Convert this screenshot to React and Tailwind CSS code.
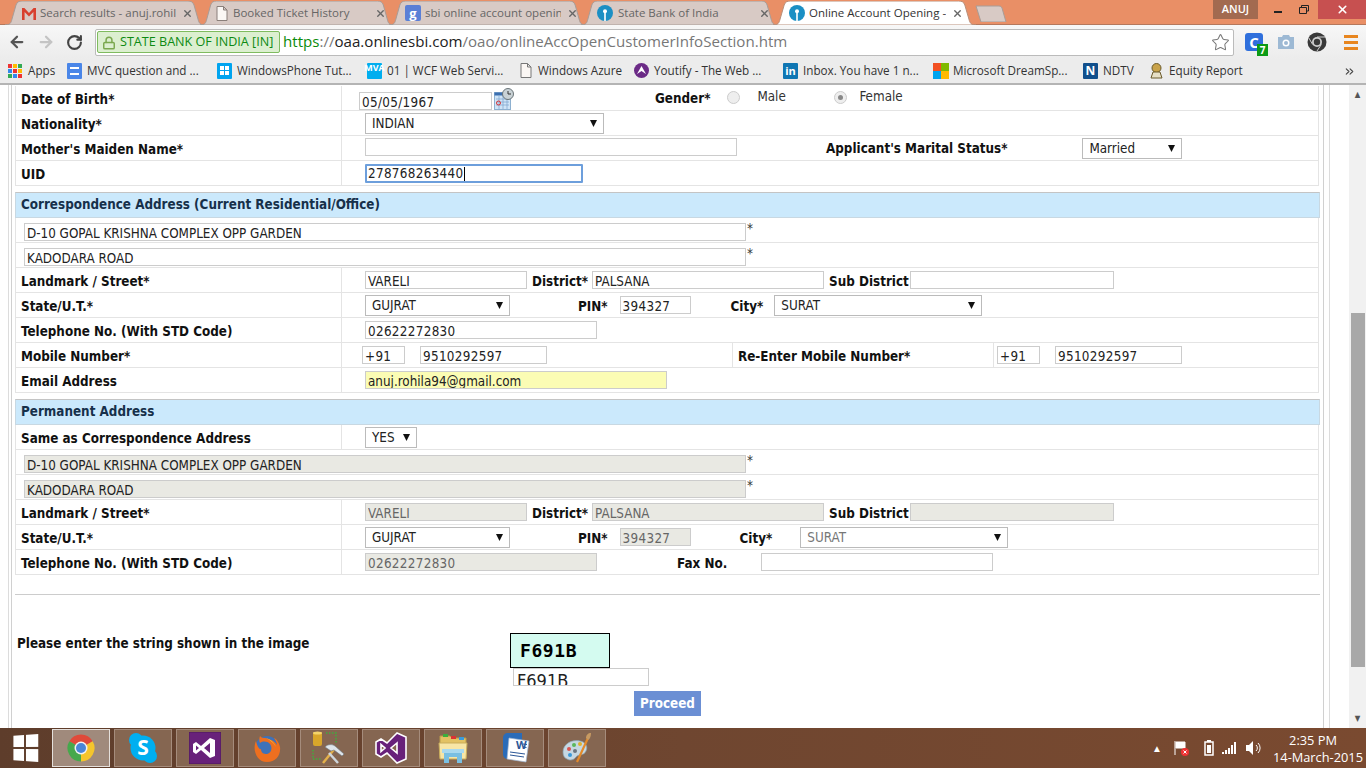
import React from "react";
import { ArrowLeft, ArrowRight, RotateCw, Star, Lock, X, ChevronsRight } from "lucide-react";

const pageFont = "font-['DejaVu_Sans_Condensed','Noto_Sans',sans-serif]";
const uiFont = "font-['Open_Sans','Noto_Sans',sans-serif]";

function TabShape({ active }) {
  return (
    <svg className="absolute inset-0 h-full w-full" viewBox="0 0 200 24" preserveAspectRatio="none">
      <path
        d="M0 24 C5 24 6 22 7 18 L11 4 C12 1 14 0 17 0 L183 0 C186 0 188 1 189 4 L193 18 C194 22 195 24 200 24 Z"
        fill={active ? "#ffffff" : "#d8cac5"}
        stroke={active ? "#b98f7a" : "#a89c97"}
        strokeWidth="1"
        vectorEffect="non-scaling-stroke"
      />
    </svg>
  );
}

function GmailIcon() {
  return (
    <svg width="16" height="13" viewBox="0 0 16 13">
      <path d="M1 1h2.400L8 6l4.600-5H15v12h-2.600V5L8 9.400 3.600 5v8H1z" fill="#d8402f" />
    </svg>
  );
}

function PageIcon({ stroke = "#8a7f7a" }) {
  return (
    <svg width="12" height="15" viewBox="0 0 12 15">
      <path d="M1 .5h6.500L11 4v10.500H1z M7.500.5V4H11" fill="#fbf7f4" stroke={stroke} />
    </svg>
  );
}

function GoogleIcon() {
  return (
    <div className="flex h-[16px] w-[16px] items-center justify-center rounded-[2px] bg-[#5a7fd6] text-[13px] font-bold leading-none text-white">
      g
    </div>
  );
}

function SbiIcon() {
  return (
    <svg width="16" height="16" viewBox="0 0 16 16">
      <circle cx="8" cy="8" r="8" fill="#1b8fc4" />
      <circle cx="8" cy="6.200" r="2" fill="#fff" />
      <rect x="7.200" y="7" width="1.600" height="9" fill="#fff" />
    </svg>
  );
}

const tabs = [
  { title: "Search results - anuj.rohila", icon: <GmailIcon />, width: "w-[200px]", iconW: "w-[19px]", pr: "pr-[12px]" },
  { title: "Booked Ticket History", icon: <PageIcon />, width: "w-[194px]", iconW: "w-[17px]", pr: "pr-[8px]" },
  { title: "sbi online account openin", icon: <GoogleIcon />, width: "w-[197px]", iconW: "w-[20px]", pr: "pr-[8px]" },
  { title: "State Bank of India", icon: <SbiIcon />, width: "w-[197px]", iconW: "w-[21px]", pr: "pr-[8px]" },
  { title: "Online Account Opening - ", icon: <SbiIcon />, width: "w-[203px]", iconW: "w-[20px]", pr: "pr-[13px]", active: true },
];

function TabStrip() {
  return (
    <div className={`flex h-[25px] items-end border-b border-[#b5785c] bg-[#e98f66] pl-[5px] ${uiFont}`}>
      {tabs.map((t) => (
        <div key={t.title} className={`relative -mb-[1px] -mr-[5px] h-[24px] shrink-0 ${t.width} ${t.active ? "z-10" : ""}`}>
          <TabShape active={t.active} />
          <div className={`relative flex h-full items-center pl-[16px] ${t.pr}`}>
            <span className={`flex shrink-0 items-center ${t.iconW}`}>{t.icon}</span>
            <span className={`flex-1 overflow-hidden whitespace-nowrap text-[11.500px] ${t.active ? "text-[#333]" : "text-[#666]"}`}>
              {t.title}
            </span>
            <X size={11} strokeWidth={3} className="ml-[6px] shrink-0 text-[#666]" />
          </div>
        </div>
      ))}
      <div className="relative ml-[4px] mt-[5px] h-[17px] w-[32px] self-start">
        <svg className="h-full w-full" viewBox="0 0 32 17">
          <path d="M1 1h23c1.500 0 2.500.8 3 2l4 14H6z" fill="#d8cac5" stroke="#a89c97" />
        </svg>
      </div>
      <div className="ml-auto flex h-[19px] self-start">
        <div className="flex w-[45px] items-center justify-center bg-[#a26a50] text-[11px] font-semibold text-white">ANUJ</div>
        <div className="ml-[16px] mt-[11px] h-[2px] w-[8px] bg-[#222]" />
        <svg className="ml-[17px] mt-[5px]" width="10" height="9" viewBox="0 0 10 9">
          <path d="M2.500 2V.5h7v5.500H8M.5 2.500h7v6h-7z" fill="none" stroke="#222" />
        </svg>
        <div className="ml-[9px] flex w-[48px] items-center justify-center bg-[#c75050]">
          <X size={13} strokeWidth={3} className="text-white" />
        </div>
      </div>
    </div>
  );
}

function ToolbarExtras() {
  return (
    <div className="flex flex-1 items-center pl-[11px]">
      <div className="relative flex h-[18px] w-[18px] items-center justify-center rounded-[3px] bg-[#2f6fdc] text-[15px] font-bold text-white">
        C
        <span className="absolute -bottom-[5px] -right-[5px] flex h-[12px] w-[11px] items-center justify-center bg-[#0c9a16] text-[10px] font-bold leading-none">
          7
        </span>
      </div>
      <svg className="ml-[14px]" width="18" height="16" viewBox="0 0 18 16">
        <path d="M1 3h4l1-2h6l1 2h4v12H1z" fill="#9db9d4" />
        <circle cx="9" cy="9" r="3.500" fill="#fff" />
        <circle cx="9" cy="9" r="2" fill="#9db9d4" />
      </svg>
      <svg className="ml-[12px]" width="20" height="20" viewBox="0 0 20 20">
        <circle cx="10" cy="10" r="9.500" fill="#3a3a3a" />
        <circle cx="10" cy="10" r="5" fill="#cfcfcf" />
        <circle cx="10" cy="10" r="3.200" fill="#3a3a3a" />
        <path d="M10 5h8.500M5.700 12.500L1.500 5.500M14.300 12.500L10 19" stroke="#cfcfcf" strokeWidth="1" />
      </svg>
      <div className="ml-[17px] flex flex-col gap-[3px]">
        <span className="h-[3px] w-[14px] bg-[#e8861f]" />
        <span className="h-[3px] w-[14px] bg-[#e8861f]" />
        <span className="h-[3px] w-[14px] bg-[#e8861f]" />
      </div>
    </div>
  );
}

function Toolbar() {
  return (
    <div className={`flex h-[34px] items-center bg-gradient-to-b from-[#f7f7f7] to-[#ececec] ${uiFont}`}>
      <div className="flex w-[95px] shrink-0 items-center pl-[8px]">
        <ArrowLeft size={18} strokeWidth={3} className="text-[#555]" />
        <ArrowRight size={18} strokeWidth={3} className="ml-[11px] text-[#c4c4c4]" />
        <RotateCw size={17} strokeWidth={3} className="ml-[11px] text-[#444]" />
      </div>
      <div className="flex h-[27px] w-[1139px] shrink-0 items-center rounded-[2px] border border-[#bbb] bg-white pl-[1px] pr-[3px]">
        <div className="flex h-[22px] w-[183px] shrink-0 items-center rounded-[2px] border border-[#7fbb5f] bg-[#dcefd0] pl-[4px] pt-[1px] text-[12.600px] text-[#0d8a12]">
          <Lock size={14} strokeWidth={2.500} className="mr-[4px] text-[#7aa84e]" />
          <span className="whitespace-nowrap">STATE BANK OF INDIA [IN]</span>
        </div>
        <div className="ml-[3px] flex-1 whitespace-nowrap pb-[2px] text-[15.100px]">
          <span className="text-[#0a8a0a]">https</span>
          <span className="text-[#777]">://</span>
          <span className="text-[#222]">oaa.onlinesbi.com</span>
          <span className="text-[#777]">/oao/onlineAccOpenCustomerInfoSection.htm</span>
        </div>
        <Star size={19} strokeWidth={1.300} className="text-[#777]" />
      </div>
      <ToolbarExtras />
    </div>
  );
}

function AppsIcon() {
  const colors = ["#e33", "#fb0", "#3a5", "#38e", "#e33", "#fb0", "#3a5", "#38e", "#e33"];
  return (
    <div className="grid grid-cols-3 gap-[1px]">
      {colors.map((c, i) => (
        <span key={i} className="h-[4px] w-[4px]" style={{ background: c }} />
      ))}
    </div>
  );
}

function Square({ bg, children }) {
  return (
    <div className={`flex h-[16px] w-[15px] items-center justify-center rounded-[1px] text-[9px] font-bold leading-none text-white ${bg}`}>
      {children}
    </div>
  );
}

const bookmarks = [
  { label: "Apps", width: "w-[59px]", icon: <AppsIcon /> },
  {
    label: "MVC question and ...",
    width: "w-[150px]",
    icon: (
      <Square bg="bg-[#4a86e8]">
        <span className="h-[8px] w-[9px] border-y-2 border-white" />
      </Square>
    ),
  },
  {
    label: "WindowsPhone Tut...",
    width: "w-[150px]",
    icon: (
      <Square bg="bg-[#00a4ef]">
        <span className="grid grid-cols-2 gap-[1px]">
          <i className="h-[4px] w-[4px] bg-white" />
          <i className="h-[4px] w-[4px] bg-white" />
          <i className="h-[4px] w-[4px] bg-white" />
          <i className="h-[4px] w-[4px] bg-white" />
        </span>
      </Square>
    ),
  },
  { label: "01 | WCF Web Servi...", width: "w-[153px]", icon: <Square bg="bg-[#00aeef] items-start text-[6px]">MVA</Square> },
  { label: "Windows Azure", width: "w-[114px]", iconW: "w-[18px]", icon: <PageIcon stroke="#777" /> },
  {
    label: "Youtify - The Web ...",
    width: "w-[149px]",
    icon: (
      <svg width="15" height="15" viewBox="0 0 15 15">
        <circle cx="7.500" cy="7.500" r="7.500" fill="#6b2a86" />
        <path d="M3 11l4.500-8 4.500 8-4.500-3z" fill="#fff" />
      </svg>
    ),
  },
  { label: "Inbox. You have 1 n...", width: "w-[150px]", icon: <Square bg="bg-[#0f76b3] text-[11px]">in</Square> },
  {
    label: "Microsoft DreamSp...",
    width: "w-[150px]",
    icon: (
      <div className="grid grid-cols-2">
        <i className="h-[8px] w-[8px] bg-[#f25022]" />
        <i className="h-[8px] w-[8px] bg-[#7fba00]" />
        <i className="h-[8px] w-[8px] bg-[#00a4ef]" />
        <i className="h-[8px] w-[8px] bg-[#ffb900]" />
      </div>
    ),
  },
  { label: "NDTV", width: "w-[66px]", icon: <Square bg="bg-[#114f8c] text-[12px]">N</Square> },
  {
    label: "Equity Report",
    width: "w-[150px]",
    icon: (
      <svg width="15" height="16" viewBox="0 0 15 16">
        <circle cx="7.500" cy="5" r="4.500" fill="#c9a34a" stroke="#6a5a2a" />
        <path d="M2 15l2-6h7l2 6z" fill="#e6dfc5" stroke="#6a5a2a" />
      </svg>
    ),
  },
];

function BookmarksBar() {
  return (
    <div className={`flex h-[26px] items-center border-b-2 border-[#b4b4b4] bg-[#ececec] pl-[8px] text-[11.700px] text-[#333] ${uiFont}`}>
      {bookmarks.map((b) => (
        <div key={b.label} className={`flex shrink-0 items-center ${b.width}`}>
          <span className={`flex shrink-0 items-center ${b.iconW || "w-[20px]"}`}>{b.icon}</span>
          <span className="whitespace-nowrap">{b.label}</span>
        </div>
      ))}
      <ChevronsRight size={13} className="ml-auto mr-[10px] text-[#444]" />
    </div>
  );
}

function Field({ value = "", w, bg = "bg-white", muted, num, className = "" }) {
  return (
    <input
      readOnly
      value={value}
      className={`h-[18px] shrink-0 border border-[#ccc] px-[2px] pt-[4px] text-[13.330px] outline-none ${num ? "tracking-[0.33px]" : ""} ${muted ? "text-[#666]" : "text-[#222]"} ${bg} ${w} ${className}`}
    />
  );
}

function Select({ value, w, muted, className = "" }) {
  return (
    <div className={`flex h-[21px] shrink-0 items-center justify-between border border-[#bbb] bg-white pl-[6px] pr-[6px] text-[13.330px] ${muted ? "text-[#777]" : "text-[#222]"} ${w} ${className}`}>
      <span className="pt-[2px]">{value}</span>
      <svg width="7" height="7" viewBox="0 0 7 7">
        <path d="M0 0h7L3.500 7z" fill="#111" />
      </svg>
    </div>
  );
}

function B({ children, className = "" }) {
  return <span className={`shrink-0 whitespace-nowrap text-[13.330px] font-bold text-[#111] ${className}`}>{children}</span>;
}

function L({ children, className = "" }) {
  return <B className={`pt-[4px] ${className}`}>{children}</B>;
}

function Row({ label, children }) {
  return (
    <div className="flex h-[25px] items-center border-b border-[#e4e4e4]">
      <div className="flex h-full w-[325px] shrink-0 items-center pl-[5px]">
        <L>{label}</L>
      </div>
      <div className="flex h-full flex-1 items-center border-l border-[#e4e4e4] pl-[23px]">{children}</div>
    </div>
  );
}

function AddressRow({ value, disabled }) {
  return (
    <div className="flex h-[25px] items-start border-b border-[#e4e4e4] pl-[8px] pt-[5px]">
      <Field value={value} w="w-[722px]" bg={disabled ? "bg-[#e9e9e3]" : "bg-white"} />
      <span className="ml-[1px] -mt-[4px] text-[13.330px] text-[#333]">*</span>
    </div>
  );
}

function SectionHeader({ title, className = "" }) {
  return (
    <div className={`flex items-center border border-[#c8d8e2] border-t-[#c4c4c4] bg-[#cbe9fc] pl-[5px] ${className}`}>
      <B className="text-[#16304a]">{title}</B>
    </div>
  );
}

function Radio({ checked }) {
  return (
    <span className="mb-[2px] flex h-[13px] w-[13px] shrink-0 items-center justify-center rounded-full border border-[#ccc] bg-[#eee]">
      {checked && <span className="h-[5px] w-[5px] rounded-full bg-[#888]" />}
    </span>
  );
}

function CalendarIcon() {
  return (
    <svg className="ml-[2px] mt-[2px] shrink-0 self-start" width="20" height="22" viewBox="0 0 20 22">
      <rect x="0.500" y="4.500" width="16" height="17" fill="#cfe4f7" stroke="#8db0d0" />
      <rect x="0.500" y="4.500" width="16" height="3" fill="#3c6fb0" />
      <path d="M2 11h13M2 14h13M2 17h13M5 8v13M9 8v13M13 8v13" stroke="#7ba3cc" strokeWidth="0.700" />
      <circle cx="4.500" cy="15" r="2" fill="none" stroke="#d33" />
      <circle cx="14" cy="6" r="5.500" fill="#c9d2d6" stroke="#6a7478" />
      <path d="M14 3v3h3" fill="none" stroke="#333" />
    </svg>
  );
}

function PersonalRows() {
  return (
    <div className="mr-[1px] border-l border-r border-[#e4e4e4]">
      <Row label="Date of Birth*">
        <div className="-ml-[6px] flex h-full w-[296px] shrink-0 items-end">
          <Field value="05/05/1967" w="w-[133px]" num />
          <CalendarIcon />
        </div>
        <L className="-mt-[2px]">Gender*</L>
        <span className="ml-[17px]"><Radio /></span>
        <span className="mb-[3px] ml-[17px] w-[77px] text-[13.330px] text-[#333]">Male</span>
        <Radio checked />
        <span className="mb-[3px] ml-[12px] text-[13.330px] text-[#333]">Female</span>
      </Row>
      <Row label="Nationality*">
        <Select value="INDIAN" w="w-[239px]" />
      </Row>
      <Row label="Mother's Maiden Name*">
        <Field w="w-[372px]" className="-mt-[2px]" />
        <L className="-mt-[2px] ml-[89px]">Applicant's Marital Status*</L>
        <Select value="Married" w="w-[100px]" className="ml-[75px]" />
      </Row>
      <Row label="UID">
        <div className="flex h-[19px] w-[218px] items-center rounded-[1px] border-2 border-[#6d9fdc] pl-[1px] pt-[1px] text-[13.330px] tracking-[0.33px] text-[#222]">
          278768263440
          <span className="h-[14px] w-[1px] bg-black" />
        </div>
      </Row>
    </div>
  );
}

function CorrespondenceRows() {
  return (
    <div className="mr-[1px] border-l border-r border-[#e4e4e4]">
      <AddressRow value="D-10 GOPAL KRISHNA COMPLEX OPP GARDEN" />
      <AddressRow value="KADODARA ROAD" />
      <Row label="Landmark / Street*">
        <Field value="VARELI" w="w-[162px]" />
        <L className="ml-[5px]">District*</L>
        <Field value="PALSANA" w="w-[232px]" className="ml-[4px]" />
        <L className="ml-[5px]">Sub District</L>
        <Field w="w-[204px]" className="ml-[1px]" />
      </Row>
      <Row label="State/U.T.*">
        <Select value="GUJRAT" w="w-[145px]" />
        <L className="ml-[68px]">PIN*</L>
        <Field value="394327" w="w-[71px]" num className="ml-[12px]" />
        <L className="ml-[40px]">City*</L>
        <Select value="SURAT" w="w-[208px]" className="ml-[11px]" />
      </Row>
      <Row label="Telephone No. (With STD Code)">
        <Field value="02622272830" w="w-[232px]" num />
      </Row>
      <Row label="Mobile Number*">
        <div className="-ml-[3px] flex h-full w-[371px] shrink-0 items-center border-r border-[#e4e4e4]">
          <Field value="+91" w="w-[43px]" num />
          <Field value="9510292597" w="w-[127px]" num className="ml-[15px]" />
        </div>
        <div className="flex h-full w-[261px] shrink-0 items-center border-r border-[#e4e4e4] pl-[5px]">
          <L>Re-Enter Mobile Number*</L>
        </div>
        <Field value="+91" w="w-[43px]" num className="ml-[3px]" />
        <Field value="9510292597" w="w-[127px]" num className="ml-[15px]" />
      </Row>
      <Row label="Email Address">
        <Field value="anuj.rohila94@gmail.com" w="w-[302px]" bg="bg-[#fbfcb4]" />
      </Row>
    </div>
  );
}

function PermanentRows() {
  return (
    <div className="mr-[1px] border-l border-r border-[#e4e4e4]">
      <Row label="Same as Correspondence Address">
        <Select value="YES" w="w-[52px]" />
      </Row>
      <AddressRow value="D-10 GOPAL KRISHNA COMPLEX OPP GARDEN" disabled />
      <AddressRow value="KADODARA ROAD" disabled />
      <Row label="Landmark / Street*">
        <Field value="VARELI" w="w-[162px]" bg="bg-[#e9e9e3]" muted />
        <L className="ml-[5px]">District*</L>
        <Field value="PALSANA" w="w-[232px]" bg="bg-[#e9e9e3]" muted className="ml-[4px]" />
        <L className="ml-[5px]">Sub District</L>
        <Field w="w-[204px]" bg="bg-[#e9e9e3]" className="ml-[1px]" />
      </Row>
      <Row label="State/U.T.*">
        <Select value="GUJRAT" w="w-[145px]" />
        <L className="ml-[68px]">PIN*</L>
        <Field value="394327" w="w-[71px]" bg="bg-[#e9e9e3]" muted num className="ml-[12px]" />
        <L className="ml-[49px]">City*</L>
        <Select value="SURAT" w="w-[208px]" muted className="ml-[28px]" />
      </Row>
      <Row label="Telephone No. (With STD Code)">
        <Field value="02622272830" w="w-[232px]" bg="bg-[#e9e9e3]" muted num />
        <L className="ml-[80px]">Fax No.</L>
        <Field w="w-[232px]" className="ml-[34px]" />
      </Row>
    </div>
  );
}

function CaptchaBlock() {
  return (
    <div>
      <div className="mt-[19px] border-t border-[#ccc]" />
      <div className="flex pt-[40px]">
        <div className="-mt-[4px] w-[495px] shrink-0 pl-[2px]">
          <B>Please enter the string shown in the image</B>
        </div>
        <div className="-mt-[2px]">
          <div className="flex h-[35px] w-[100px] items-center border border-black bg-[#d4fbf0] pl-[9px] font-['DejaVu_Sans_Mono',monospace] text-[18px] font-bold tracking-[0.6px] text-black">
            F691B
          </div>
          <div className="ml-[3px] h-[18px] w-[136px] overflow-hidden border border-[#ccc] pl-[3px] text-[18px] leading-[24px] text-[#222]">
            F691B
          </div>
          <div className="ml-[124px] mt-[5px] flex h-[25px] w-[67px] items-center justify-center bg-[#6b8fd4] text-[13.330px] font-bold text-white">
            Proceed
          </div>
        </div>
      </div>
    </div>
  );
}

function Scrollbar() {
  return (
    <div className="flex w-[17px] shrink-0 flex-col items-center bg-[#f1f1f1]">
      <span className="mt-[6px] text-[8px] leading-[8px] text-[#555]">▲</span>
      <div className="mt-[214px] h-[354px] w-[14px] bg-[#a8a8a8]" />
      <span className="mt-[48px] text-[8px] leading-[8px] text-[#555]">▼</span>
    </div>
  );
}

function Content() {
  return (
    <div className={`flex h-[643px] overflow-hidden bg-white ${pageFont}`}>
      <div className="ml-[8px] mr-[19px] flex flex-1 border-x border-[#dcdcdc]">
        <div className="ml-[2px] mr-[5px] flex-1 border-x border-[#d0d0d0] pl-[3px] pr-[3px] pt-[1px]">
          <PersonalRows />
          <SectionHeader title="Correspondence Address (Current Residential/Office)" className="mt-[6px] h-[26px]" />
          <CorrespondenceRows />
          <SectionHeader title="Permanent Address" className="mt-[6px] h-[26px]" />
          <PermanentRows />
          <CaptchaBlock />
        </div>
      </div>
      <Scrollbar />
    </div>
  );
}

const taskIcons = [
  <svg width="28" height="28" viewBox="0 0 28 28">
    <path d="M14 14L2.300 7.250A13.500 13.500 0 0 1 25.700 7.250z" fill="#e04a3a" />
    <path d="M14 14L25.700 7.250A13.500 13.500 0 0 1 14 27.500z" fill="#f5c52c" />
    <path d="M14 14L14 27.500A13.500 13.500 0 0 1 2.300 7.250z" fill="#46a84c" />
    <circle cx="14" cy="14" r="6.500" fill="#f2f2f2" />
    <circle cx="14" cy="14" r="5" fill="#4a86d8" />
  </svg>,
  <svg width="30" height="32" viewBox="0 0 30 32">
    <circle cx="15" cy="16" r="12.500" fill="#00aff0" />
    <circle cx="8" cy="8" r="7" fill="#00aff0" />
    <circle cx="22" cy="24" r="7" fill="#00aff0" />
    <text x="15" y="23" textAnchor="middle" fontSize="21" fontWeight="700" fill="#fff" fontFamily="Open Sans">S</text>
  </svg>,
  <svg width="32" height="32" viewBox="0 0 32 32">
    <rect width="32" height="32" fill="#68217a" stroke="#4c1a5a" />
    <path fillRule="evenodd" d="M21 6L12 14 7 10 4 12V20L7 22 12 18 21 26 26 24V8ZM7 13.500V18.500L10 16ZM21 11L15 16 21 21Z" fill="#fff" />
  </svg>,
  <svg width="30" height="30" viewBox="0 0 30 30">
    <circle cx="15" cy="15" r="12" fill="#3f72b8" />
    <path d="M8 3C7 6 7 8 8 10 11 8 15 8 18 11 21 15 19 21 14 21 10 21 9 18 9 16 7 17 5 12 4 8 0 17 5 29 15 29 24 29 29 22 28 14 27 10 25 6 22 5 24 8 25 10 25 12 22 7 15 5 12 5 10 5 9 4 8 3Z" fill="#ee6f1f" />
    <path d="M14 5c4 1 8 4 10 9-3-5-6-7-10-9z" fill="#f9c13a" />
  </svg>,
  <svg width="34" height="34" viewBox="0 0 34 34">
    <rect x="1" y="1" width="9" height="14" rx="2" fill="#d9a62a" />
    <ellipse cx="5.500" cy="2" rx="4.500" ry="1.500" fill="#f4d46a" />
    <path d="M14 2h10v10M1 19v9h8" fill="none" stroke="#3fae3f" strokeWidth="1.500" strokeDasharray="1.500 1.500" />
    <path d="M11 32l13-16" stroke="#e3b04b" strokeWidth="2.500" />
    <path d="M13 16c3-3 7-3 10-1l9 8-2 2-8-6-3 1z" fill="#dfe5ea" stroke="#6b7680" strokeWidth="0.600" />
    <path d="M17 22l9 10" stroke="#cfd6dc" strokeWidth="2.500" />
  </svg>,
  <svg width="32" height="34" viewBox="0 0 32 34">
    <path fillRule="evenodd" d="M22 2L12 12 6 8 1 11V23L6 26 12 22 22 32 31 28V6ZM6 13.500V20.500L10 17ZM22 12L16 17 22 22Z" fill="#68217a" stroke="#fff" strokeWidth="1.600" />
  </svg>,
  <svg width="32" height="32" viewBox="0 0 32 32">
    <path d="M3 4h10l2 2h14v20H3z" fill="#e3c263" stroke="#b79a4a" />
    <rect x="6" y="2" width="5" height="3" fill="#3cae3c" />
    <rect x="14" y="4" width="5" height="3" fill="#d33" />
    <rect x="22" y="5" width="5" height="3" fill="#3a9ad9" />
    <path d="M2 11h28l-1 16H3z" fill="#f8e6a6" stroke="#c9ad5c" />
    <path d="M7 20h18v11h-5v-6h-8v6H7z" fill="#79bfe2" />
    <rect x="5" y="17" width="22" height="4" fill="#a9d9ef" />
  </svg>,
  <svg width="32" height="32" viewBox="0 0 32 32">
    <path d="M9 1h14v26H9c-3 0-5-2-5-5V6c0-3 2-5 5-5z" fill="#2b6cb8" />
    <path d="M10 6l20 3-3 21-19-3z" fill="#fff" stroke="#9fb4d0" strokeWidth="0.700" />
    <text x="17" y="17" fontSize="11" fontWeight="700" fill="#2b5797" fontFamily="Open Sans">W</text>
    <path d="M11 20l15 2M11 23l14 2" stroke="#2b5797" />
    <path d="M24 12l4 .5M24 15l3.500.5" stroke="#2b5797" />
  </svg>,
  <svg width="32" height="32" viewBox="0 0 32 32">
    <path d="M2 20c0-8 9-13 17-11 6 1 8 6 6 10-2 5-8 3-10 6-2 3-6 4-9 2-3-1-4-4-4-7z" fill="#c6d8e2" stroke="#8aa3b2" strokeWidth="0.700" />
    <circle cx="8" cy="17" r="2" fill="#d9534f" />
    <circle cx="13" cy="13" r="2" fill="#5cb85c" />
    <circle cx="19" cy="12" r="2" fill="#e0b030" />
    <circle cx="9" cy="23" r="2" fill="#3a9ad9" />
    <circle cx="14" cy="19" r="2" fill="#6b7680" />
    <path d="M27 6L16 30" stroke="#e38a2a" strokeWidth="2.200" />
    <path d="M25 6c0-3 2-5 5-5 0 3-1 6-3 7z" fill="#c79a62" />
  </svg>,
];

function Tray() {
  return (
    <div className="ml-auto flex items-center pr-[13px] text-white">
      <span className="text-[10px]">▲</span>
      <svg className="ml-[12px]" width="16" height="16" viewBox="0 0 16 16">
        <path d="M1 1v14M2 2h9v6H2z" fill="#fff" stroke="#fff" />
        <circle cx="11" cy="12" r="4" fill="#e33" />
        <path d="M9.500 10.500l3 3M12.500 10.500l-3 3" stroke="#fff" />
      </svg>
      <svg className="ml-[14px]" width="10" height="16" viewBox="0 0 10 16">
        <rect x="1" y="2" width="8" height="13" fill="none" stroke="#fff" strokeWidth="1.500" />
        <rect x="3" y="5" width="4" height="8" fill="#fff" />
        <rect x="3" y="0" width="4" height="2" fill="#fff" />
      </svg>
      <svg className="ml-[8px]" width="16" height="12" viewBox="0 0 16 12">
        <path d="M0 10h2v2H0zM3 8h2v4H3zM6 6h2v6H6zM9 3h2v9H9zM12 0h2v12h-2z" fill="#fff" />
      </svg>
      <svg className="ml-[8px]" width="16" height="14" viewBox="0 0 16 14">
        <path d="M0 4h3l4-4v14l-4-4H0z" fill="#fff" />
        <path d="M10 4a4 4 0 0 1 0 6M12 2a7 7 0 0 1 0 10" fill="none" stroke="#fff" />
      </svg>
      <div className="ml-[11px] w-[80px] pt-[2px] text-center text-[12.800px] leading-[17px]">
        <div>2:35 PM</div>
        <div className="whitespace-nowrap">14-March-2015</div>
      </div>
    </div>
  );
}

function Taskbar() {
  return (
    <div className={`flex h-[40px] items-center bg-gradient-to-r from-[#5e3d2b] via-[#6f4630] to-[#7a4a30] ${uiFont}`}>
      <div className="flex w-[52px] shrink-0 justify-center pr-[2px]">
        <div className="grid grid-cols-2 gap-[2px] [transform:perspective(60px)_rotateY(-18deg)]">
          <i className="h-[12px] w-[12px] bg-white" />
          <i className="h-[12px] w-[12px] bg-white" />
          <i className="h-[12px] w-[12px] bg-white" />
          <i className="h-[12px] w-[12px] bg-white" />
        </div>
      </div>
      <div className="flex gap-[4px]">
        {taskIcons.map((icon, i) => (
          <div
            key={i}
            className={`flex h-[38px] w-[58px] items-center justify-center border ${i === 0 ? "border-[#e5e0dc] bg-[#a08a7c]" : "border-[#a58c7c] bg-[#856651]"}`}
          >
            {icon}
          </div>
        ))}
      </div>
      <Tray />
    </div>
  );
}

export default function App() {
  return (
    <div className="flex h-[768px] w-[1366px] flex-col overflow-hidden">
      <TabStrip />
      <Toolbar />
      <BookmarksBar />
      <Content />
      <Taskbar />
    </div>
  );
}
